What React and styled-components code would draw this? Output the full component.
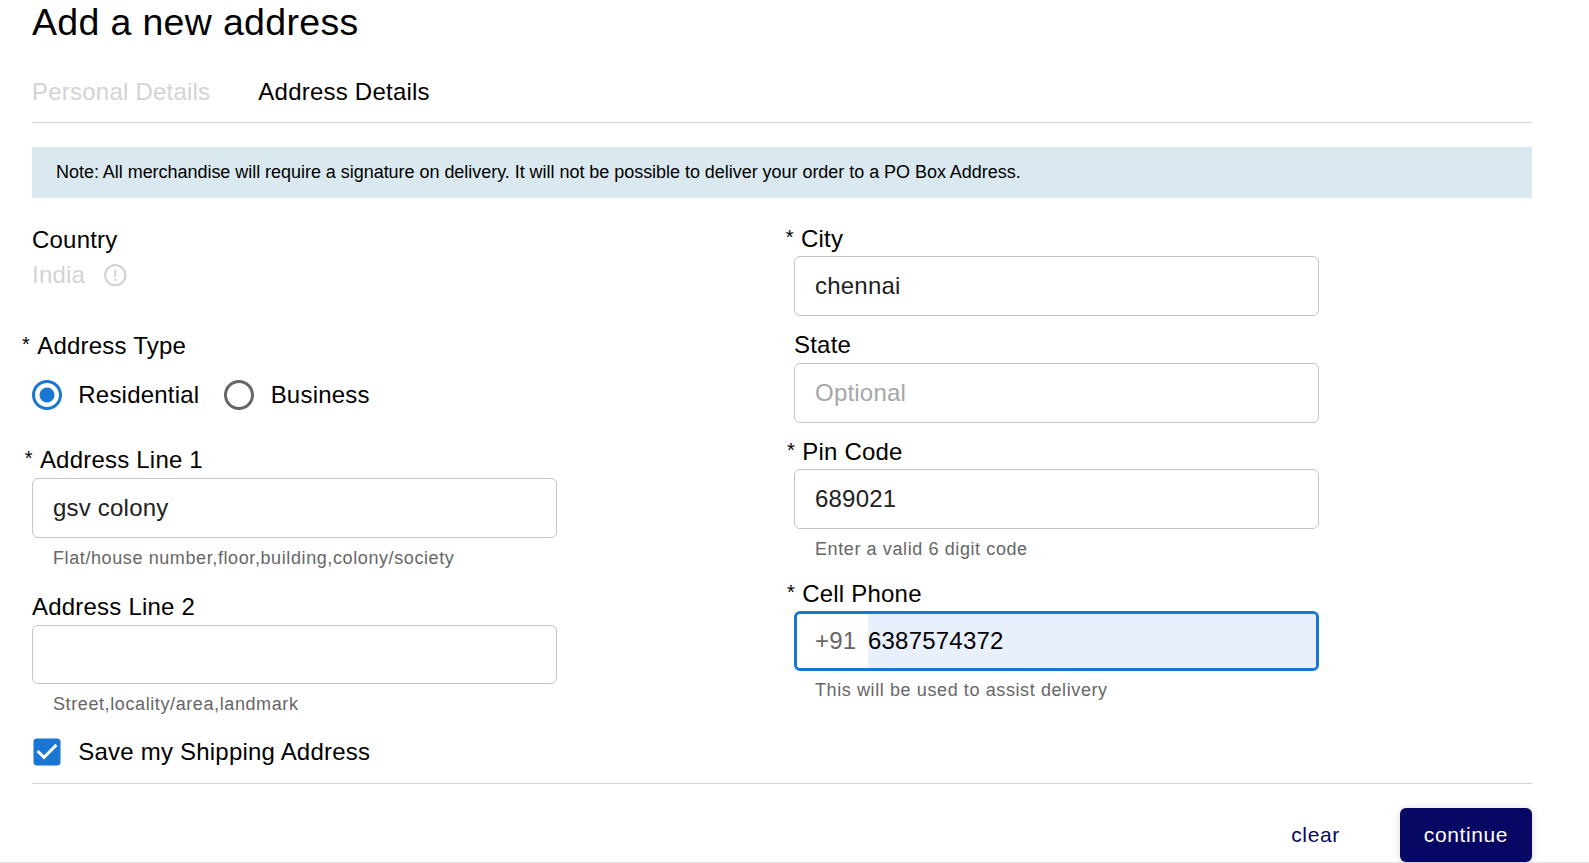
import React from "react";
import styled, { createGlobalStyle } from "styled-components";

const GlobalStyle = createGlobalStyle`
  * { box-sizing: border-box; }
  body {
    margin: 0;
    background: #fff;
    color: #000;
    font-family: "Liberation Sans", Arial, sans-serif;
    font-size: 24px;
    letter-spacing: 0.21px;
    overflow: hidden;
  }
`;

const Page = styled.main`
  height: 863px;
  border-bottom: 1px solid #e4e4e4;
`;

const Content = styled.div`
  width: 1500px;
  margin-left: 32px;
`;

const Title = styled.h1`
  margin: 0;
  font-size: 37.5px;
  font-weight: 400;
  line-height: 44px;
  letter-spacing: 0.33px;
`;

const Tabs = styled.nav`
  display: flex;
  gap: 48px;
  height: 79px;
  padding-top: 34px;
  border-bottom: 1px solid #d3d3d3;
`;

const Tab = styled.span`
  line-height: 28px;
  letter-spacing: 0.225px;
  color: ${(p) => (p.$muted ? "#d3d3d3" : "#000")};
`;

const Note = styled.p`
  margin: 24px 0 0;
  padding: 0 24px;
  height: 51px;
  line-height: 50px;
  background: #d9e9ef;
  font-size: 18px;
  letter-spacing: -0.036px;
`;

const Columns = styled.form`
  display: grid;
  grid-template-columns: 525px 525px;
  column-gap: 237px;
  height: 586px;
  border-bottom: 1px solid #d3d3d3;
`;

const Column = styled.div`
  padding-top: ${(p) => p.$top}px;
`;

const FieldBlock = styled.div`
  margin-top: ${(p) => p.$gap || 0}px;
`;

const LabelText = styled.label`
  display: block;
  height: 28px;
  line-height: 28px;
  margin-left: ${(p) => -(p.$hang || 0)}px;
`;

const Asterisk = styled.span`
  display: inline-block;
  width: 15.2px;
  font-size: 20px;
  line-height: 20px;
  vertical-align: 3px;
`;

const InputFrame = styled.div`
  display: flex;
  align-items: stretch;
  height: ${(p) => p.$height || 60}px;
  margin-top: ${(p) => p.$gap || 3}px;
  padding-left: ${(p) => (p.$focused ? 18 : 20)}px;
  border: ${(p) => (p.$focused ? "3px solid #1976d2" : "1px solid #c4c4c4")};
  border-radius: 6px;
  overflow: hidden;
`;

const Prefix = styled.span`
  display: flex;
  align-items: center;
  width: 53px;
  color: #666;
`;

const Input = styled.input`
  flex: 1;
  min-width: 0;
  padding: 0;
  border: 0;
  outline: 0;
  font: inherit;
  letter-spacing: inherit;
  color: ${(p) => (p.$filled ? "#000" : "#212121")};
  background: ${(p) => (p.$filled ? "#e8f0fe" : "transparent")};
  &::placeholder { color: #a6a6a6; opacity: 1; }
`;

const Helper = styled.p`
  margin: ${(p) => p.$gap || 8}px 0 0 21px;
  font-size: 18px;
  line-height: 24px;
  letter-spacing: 0.6px;
  color: #666;
`;

const CountryValue = styled.div`
  display: flex;
  align-items: center;
  gap: 19px;
  margin-top: 7px;
  line-height: 28px;
  color: #d3d3d3;
`;

const RadioRow = styled.div`
  display: flex;
  gap: 25px;
  margin-top: 20px;
`;

const Choice = styled.label`
  display: flex;
  align-items: center;
  gap: 16.3px;
  line-height: 30px;
`;

const SaveRow = styled.div`
  margin-top: 22px;
  height: 28px;
  display: flex;
  align-items: center;
`;

const Actions = styled.footer`
  display: flex;
  justify-content: flex-end;
  gap: 36px;
  margin-top: 24px;
`;

const Button = styled.button`
  height: 54px;
  padding: 0 24px;
  border: 0;
  border-radius: 6px;
  font: inherit;
  font-size: 21px;
  letter-spacing: 0.6px;
  color: ${(p) => (p.$primary ? "#fff" : "#070764")};
  background: ${(p) => (p.$primary ? "#070764" : "transparent")};
  box-shadow: ${(p) => (p.$primary ? "0 1px 8px rgba(0,0,0,.15)" : "none")};
`;

const Radio = ({ checked }) => (
  <svg width="30" height="30" viewBox="2 2 20 20" fill={checked ? "#1976d2" : "#666"}>
    <path d="M12 2C6.48 2 2 6.48 2 12s4.48 10 10 10 10-4.48 10-10S17.52 2 12 2zm0 18c-4.42 0-8-3.58-8-8s3.58-8 8-8 8 3.58 8 8-3.58 8-8 8z" />
    {checked && <circle cx="12" cy="12" r="5" />}
  </svg>
);

const ErrorOutline = () => (
  <svg width="22.5" height="22.5" viewBox="2 2 20 20" fill="#d3d3d3">
    <path d="M11 15h2v2h-2zm0-8h2v6h-2zm.99-5C6.47 2 2 6.48 2 12s4.47 10 9.99 10C17.52 22 22 17.52 22 12S17.52 2 11.99 2zM12 20c-4.42 0-8-3.58-8-8s3.58-8 8-8 8 3.58 8 8-3.58 8-8 8z" />
  </svg>
);

const CheckBox = () => (
  <svg width="30" height="28" viewBox="2 2.7 20 18.6" fill="#1976d2">
    <path d="M19 3H5c-1.11 0-2 .9-2 2v14c0 1.1.89 2 2 2h14c1.11 0 2-.9 2-2V5c0-1.1-.89-2-2-2zm-9 14l-5-5 1.41-1.41L10 14.17l7.59-7.59L19 8l-9 9z" />
  </svg>
);

function Label({ required, hang, children, ...rest }) {
  return (
    <LabelText $hang={hang} {...rest}>
      {required && <Asterisk>*</Asterisk>}
      {children}
    </LabelText>
  );
}

function Field({ label, required, hang, gap, inputGap, height, helper, helperGap, prefix, ...input }) {
  return (
    <FieldBlock $gap={gap}>
      <Label required={required} hang={hang}>{label}</Label>
      <InputFrame $gap={inputGap} $height={height} $focused={!!prefix}>
        {prefix && <Prefix>{prefix}</Prefix>}
        <Input $filled={!!prefix} aria-label={label} {...input} />
      </InputFrame>
      {helper && <Helper $gap={helperGap}>{helper}</Helper>}
    </FieldBlock>
  );
}

export default function App() {
  return (
    <>
      <GlobalStyle />
      <Page>
        <Content>
          <Title>Add a new address</Title>
          <Tabs>
            <Tab $muted>Personal Details</Tab>
            <Tab>Address Details</Tab>
          </Tabs>
          <Note>
            Note: All merchandise will require a signature on delivery. It will not be possible to
            deliver your order to a PO Box Address.
          </Note>
          <Columns>
            <Column $top={28}>
              <Label as="div">Country</Label>
              <CountryValue>
                India
                <ErrorOutline />
              </CountryValue>
              <FieldBlock $gap={43}>
                <Label as="div" required hang={10}>Address Type</Label>
                <RadioRow>
                  <Choice><Radio checked />Residential</Choice>
                  <Choice><Radio />Business</Choice>
                </RadioRow>
              </FieldBlock>
              <Field
                label="Address Line 1"
                required
                hang={7.3}
                gap={36}
                inputGap={4}
                defaultValue="gsv colony"
                helper="Flat/house number,floor,building,colony/society"
              />
              <Field
                label="Address Line 2"
                gap={23}
                inputGap={4}
                height={59}
                helper="Street,locality/area,landmark"
              />
              <SaveRow>
                <Choice><CheckBox />Save my Shipping Address</Choice>
              </SaveRow>
            </Column>
            <Column $top={27}>
              <Field label="City" required hang={8.2} defaultValue="chennai" />
              <Field label="State" gap={15} inputGap={4} placeholder="Optional" />
              <Field
                label="Pin Code"
                required
                hang={7}
                gap={15}
                defaultValue="689021"
                helper="Enter a valid 6 digit code"
              />
              <Field
                label="Cell Phone"
                required
                hang={7}
                gap={19}
                prefix="+91"
                defaultValue="6387574372"
                helper="This will be used to assist delivery"
                helperGap={7}
              />
            </Column>
          </Columns>
          <Actions>
            <Button>clear</Button>
            <Button $primary>continue</Button>
          </Actions>
        </Content>
      </Page>
    </>
  );
}
